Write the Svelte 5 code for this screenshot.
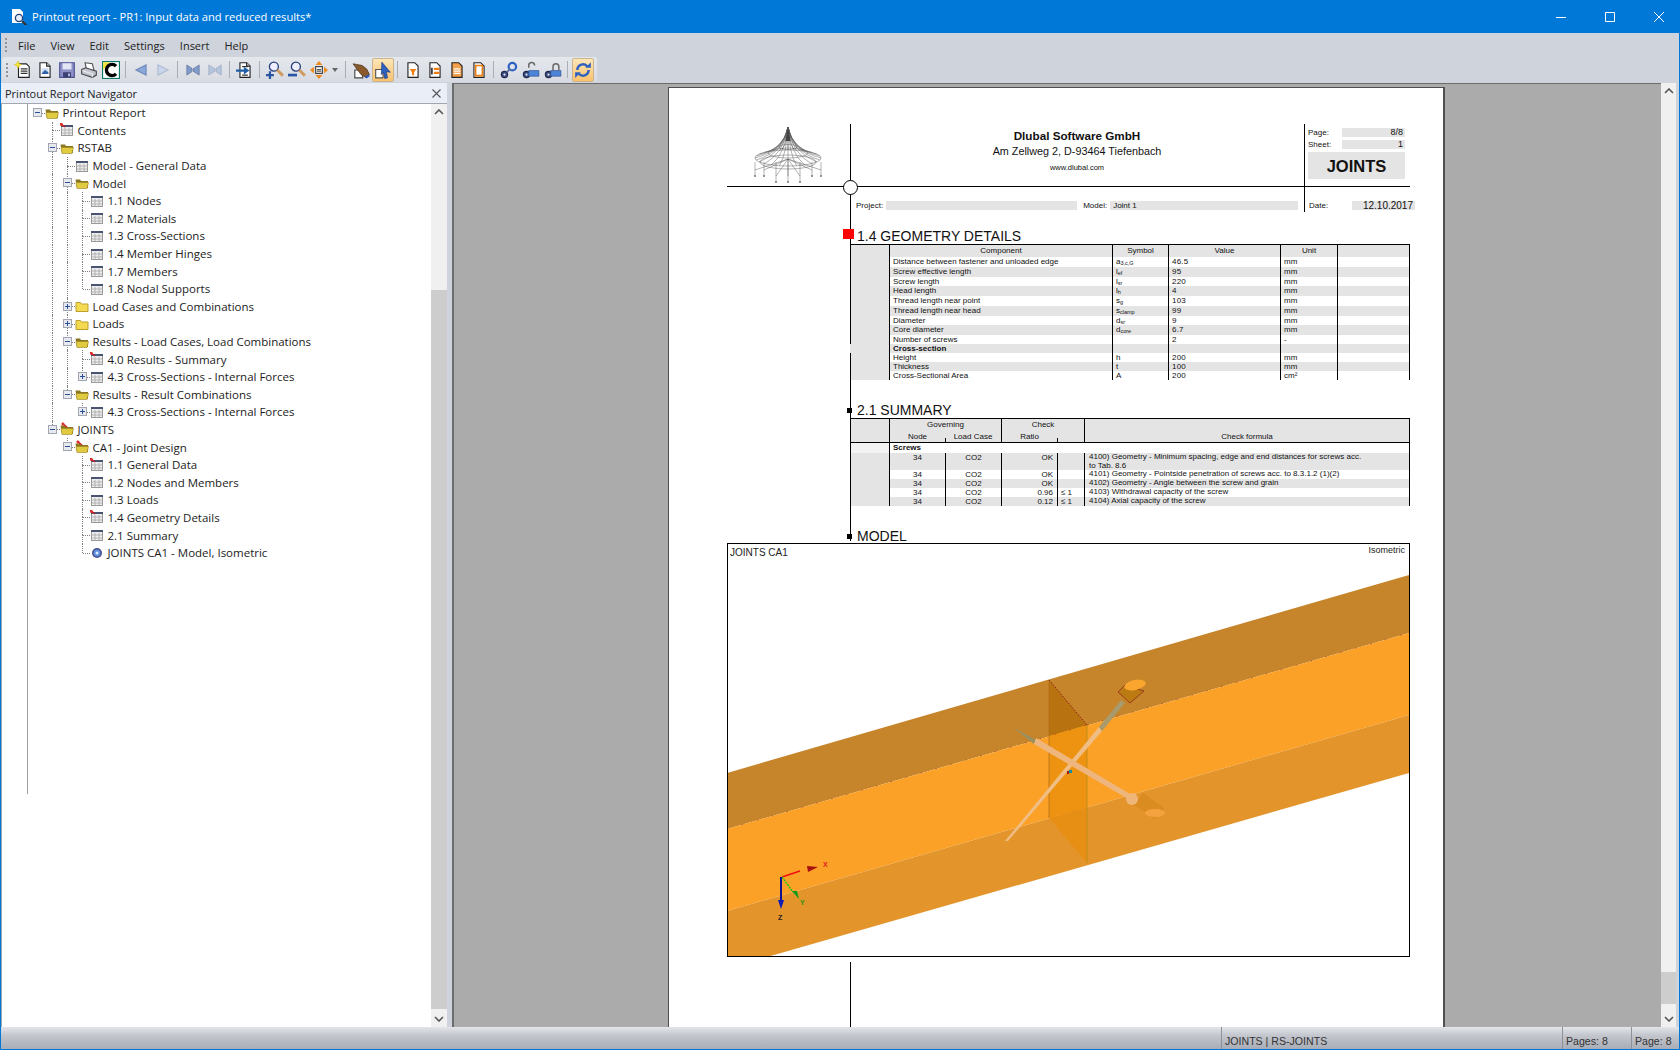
<script>
	const menus = ['File', 'View', 'Edit', 'Settings', 'Insert', 'Help'];

	// groups of toolbar icons, a separator between each group
	const toolGroups = [
		['new', 'image', 'save', 'print', 'refresh'],
		['prev', 'next'],
		['first', 'last'],
		['export'],
		['zoomin', 'zoomout', 'fit', 'drop'],
		['hand', 'pointer'],
		['filter', 'lines', 'orange', 'blank'],
		['link', 'unlock', 'lock'],
		['sync']
	];
	const activeTools = ['pointer', 'sync'];

	const rawTree = [
		[0, 'Printout Report', 'folder', '-'],
		[1, 'Contents', 'pinned'],
		[1, 'RSTAB', 'folder', '-'],
		[2, 'Model - General Data', 'table'],
		[2, 'Model', 'folder', '-'],
		[3, '1.1 Nodes', 'table'],
		[3, '1.2 Materials', 'table'],
		[3, '1.3 Cross-Sections', 'table'],
		[3, '1.4 Member Hinges', 'table'],
		[3, '1.7 Members', 'table'],
		[3, '1.8 Nodal Supports', 'table'],
		[2, 'Load Cases and Combinations', 'closed', '+'],
		[2, 'Loads', 'closed', '+'],
		[2, 'Results - Load Cases, Load Combinations', 'folder', '-'],
		[3, '4.0 Results - Summary', 'pinned'],
		[3, '4.3 Cross-Sections - Internal Forces', 'table', '+'],
		[2, 'Results - Result Combinations', 'folder', '-'],
		[3, '4.3 Cross-Sections - Internal Forces', 'table', '+'],
		[1, 'JOINTS', 'pinfolder', '-'],
		[2, 'CA1 - Joint Design', 'pinfolder', '-'],
		[3, '1.1 General Data', 'pinned'],
		[3, '1.2 Nodes and Members', 'table'],
		[3, '1.3 Loads', 'table'],
		[3, '1.4 Geometry Details', 'pinned'],
		[3, '2.1 Summary', 'table'],
		[3, 'JOINTS CA1 - Model, Isometric', 'eye']
	];

	// does another row of this level follow before the branch closes?
	function continues(idx, level) {
		for (let i = idx + 1; i < rawTree.length; i++) {
			if (rawTree[i][0] < level) return false;
			if (rawTree[i][0] === level) return true;
		}
		return false;
	}

	const tree = rawTree.map(([level, label, icon, exp], idx) => ({
		level,
		label,
		icon,
		exp,
		guides: Array.from({ length: level }, (_, j) => j > 0 && continues(idx, j)),
		more: level > 0 && continues(idx, level)
	}));

	const geometry = [
		['Distance between fastener and unloaded edge', 'a', '3,c,G', '46.5', 'mm', 10],
		['Screw effective length', 'l', 'ef', '95', 'mm', 10],
		['Screw length', 'l', 'sr', '220', 'mm', 9],
		['Head length', 'l', 'h', '4', 'mm', 10],
		['Thread length near point', 's', 'g', '103', 'mm', 10],
		['Thread length near head', 's', 'clamp', '99', 'mm', 10],
		['Diameter', 'd', 'sr', '9', 'mm', 9],
		['Core diameter', 'd', 'core', '6.7', 'mm', 10],
		['Number of screws', '', '', '2', '-', 9],
		['Cross-section', '', '', '', '', 9],
		['Height', 'h', '', '200', 'mm', 9],
		['Thickness', 't', '', '100', 'mm', 9],
		['Cross-Sectional Area', 'A', '', '200', 'cm²', 9]
	];

	const checks = [
		['OK', '', '4100) Geometry - Minimum spacing, edge and end distances for screws acc.\nto Tab. 8.6', 17],
		['OK', '', '4101) Geometry - Pointside penetration of screws acc. to 8.3.1.2 (1)(2)', 9],
		['OK', '', '4102) Geometry - Angle between the screw and grain', 9],
		['0.96', '≤ 1', '4103) Withdrawal capacity of the screw', 9],
		['0.12', '≤ 1', '4104) Axial capacity of the screw', 9]
	];

	// roof of the logo: curved ribs from the mast down to an elliptical ring
	const ribs = Array.from({ length: 24 }, (_, i) => {
		const a = (i / 24) * Math.PI * 2;
		const x = 61 + 33 * Math.cos(a);
		const y = 34 + 8 * Math.sin(a);
		return `M61 3Q${61 + 5 * Math.cos(a)} ${27 + 2 * Math.sin(a)} ${x.toFixed(1)} ${y.toFixed(1)}`;
	});
	const legs = [-33, -24, -12, 0, 12, 24, 33];
</script>

{#snippet page(fill = '#fff')}
	<path d="M3.5 1.5h6l3 3v10h-9z" fill={fill} stroke="#222" />
	<path d="M9.5 1.5v3h3" fill="#ddd" stroke="#222" />
{/snippet}

{#snippet glass(x, y)}
	<circle cx={x} cy={y} r="3.6" fill="#e6eef8" stroke="#1d3f7c" stroke-width="1.3" />
	<path d="M{x + 3} {y + 3}l5 5" stroke="#333" stroke-width="2.2" />
{/snippet}

{#snippet tool(name)}
	<svg viewBox="0 0 16 16" width="18" height="18">
		{#if name === 'new'}
			<path d="M4 2.500h7l2.500 2.500v9.500H4z" fill="#fff" stroke="#222" />
			<path d="M6 7h6M6 9h6M6 11h6" stroke="#333" />
			<path d="M3.500 0l1 2.400 2.400.8-2.400 1-1 2.400-1-2.400-2.400-1 2.400-.8z" fill="#f6e63a" stroke="#d0b400" stroke-width=".4" />
		{:else if name === 'image'}
			{@render page()}
			<path d="M5 6.500h6v5H5z" fill="#cfdcf0" />
			<path d="M5 11l3-3 3 2v1.500H5z" fill="#2f62a8" />
		{:else if name === 'save'}
			<path d="M1.500 1.500h13v13h-13z" fill="#8c90c6" stroke="#4d5290" />
			<path d="M4 2h8v5.500H4z" fill="#e3e5f4" />
			<path d="M4.500 10h7v4.500h-7z" fill="#3c3f72" />
			<path d="M9 11h1.500v2.500H9z" fill="#c9cbe4" />
		{:else if name === 'print'}
			<path d="M4.500 1.500l6.500 1 1.500 6h-6.500z" fill="#fff" stroke="#555" />
			<path d="M1.500 7.500l3.500-1.500 9.500 3v3.500l-3.500 2-9.500-3z" fill="#c3c6cf" stroke="#444" />
			<path d="M2 8.500l9 3v3" fill="none" stroke="#fff" stroke-width=".7" />
		{:else if name === 'refresh'}
			<rect x=".5" y=".5" width="15" height="15" fill="#fff" stroke="#0d7a68" />
			<path d="M1 1h6L1 8z" fill="#f1e23b" />
			<path d="M12.500 4.500A5 5 0 1 0 12.500 11.500" fill="none" stroke="#000" stroke-width="3" />
		{:else if name === 'prev'}
			<path d="M3.500 8L12.500 3.500v9z" fill="#8aa8dc" stroke="#6f88b8" />
		{:else if name === 'next'}
			<path d="M12.500 8L3.500 3.500v9z" fill="#c9d6ec" stroke="#aebbd2" />
		{:else if name === 'first'}
			<path d="M2.500 3.500L7 6.500v3l-4.500 3zM13.500 3.500L8 7v2l5.500 3.500z" fill="#7f9ccf" stroke="#5f6f90" stroke-width=".6" />
		{:else if name === 'last'}
			<path d="M13.500 3.500L9 6.500v3l4.500 3zM2.500 3.500L8 7v2l-5.500 3.500z" fill="#b6c5de" stroke="#98a6bd" stroke-width=".6" />
		{:else if name === 'export'}
			{@render page()}
			<path d="M5.500 5h5M5.500 12.500h5" stroke="#333" />
			<path d="M0 7.500h7V5l5 3.500-5 3.500V9.500H0z" fill="#1f5fa8" />
		{:else if name === 'zoomin'}
			<path d="M0 12.500h7M3.500 9v7" stroke="#2a55a5" stroke-width="2" />
			<circle cx="7" cy="5" r="4" fill="#eef" stroke="#2a3f7c" stroke-width="1.200" />
			<path d="M10 8l5 5" stroke="#d09a60" stroke-width="2.600" />
		{:else if name === 'zoomout'}
			<path d="M0 12.500h8" stroke="#2a55a5" stroke-width="2.400" />
			<circle cx="7" cy="5" r="4" fill="#eef" stroke="#2a3f7c" stroke-width="1.200" />
			<path d="M10 8l5 5" stroke="#d09a60" stroke-width="2.600" />
		{:else if name === 'fit'}
			<path d="M5 5h6v6H5z" fill="#fff" stroke="#444" />
			<path d="M6 7.500h4M6 9h4" stroke="#555" />
			<path d="M8 0l3 3.500H5zM8 16l3-3.500H5zM0 8l3.500-3v6zM16 8l-3.500-3v6z" fill="#ef8a1c" />
		{:else if name === 'hand'}
			<path d="M2.500 8h7v7h-7z" fill="#fff" stroke="#444" />
			<path d="M1 2.500l3 .5 5 1 4 3 2.500 5-3 2.500-4-2-4-5z" fill="#8a5a2c" stroke="#3e2510" stroke-width=".6" />
			<path d="M11 14l4-2 .8 1.500-3 2z" fill="#2c55b8" />
		{:else if name === 'pointer'}
			<path d="M1.500 7.500h6.500v7.500H1.500z" fill="#fff" stroke="#555" />
			<path d="M7 1l7.500 9-3.500-.5 1 5.500-2.500.5-1-5.500-2 2z" fill="#2e62c0" stroke="#1b3a80" stroke-width=".6" />
		{:else if name === 'filter' || name === 'lines' || name === 'orange' || name === 'blank'}
			<path d="M3.500 1.500h6l3 3v10h-9z" fill={name === 'orange' ? '#f2a04a' : '#fff'} stroke="#222" />
			{#if name === 'filter'}
				<path d="M5 7h6L9 10v3L7 12v-2z" fill="#ef7d10" />
			{:else if name === 'lines'}
				<path d="M7 6h5v2H7zM7 9.500h5v2H7z" fill="#ef7d10" />
				<path d="M4.500 6h1.500v6H4.500z" fill="#333" />
			{:else if name === 'orange'}
				<path d="M5 7h6M5 9h6M5 11h6" stroke="#fff" />
			{:else}
				<path d="M5 4h6v9H5z" fill="#fff" stroke="#ef7d10" stroke-width="1.400" />
			{/if}
		{:else if name === 'link' || name === 'unlock' || name === 'lock'}
			<circle cx="4" cy="12" r="2.800" fill="#3a4b7c" stroke="#1d2950" />
			<circle cx="4" cy="12" r="1" fill="#dfe6f5" />
			{#if name === 'link'}
				<circle cx="11" cy="5" r="3.300" fill="none" stroke="#2e62c0" stroke-width="2" />
				<path d="M6 10l3-3" stroke="#5a6c9c" stroke-width="1.600" />
			{:else}
				<path d="M6 8.500h9v5H6z" fill="#4d86d8" stroke="#2c4e90" stroke-width=".6" />
				<path d={name === 'lock' ? 'M8 8.500V5a2.600 2.600 0 0 1 5.200 0v3.500' : 'M6 6V4a2.600 2.600 0 0 1 5.200 0'} fill="none" stroke="#666" stroke-width="1.300" />
			{/if}
		{:else if name === 'sync'}
			<path d="M3 8a5 5 0 0 1 9-3" fill="none" stroke="#2f62c0" stroke-width="2.200" />
			<path d="M13 8a5 5 0 0 1-9 3" fill="none" stroke="#2f62c0" stroke-width="2.200" />
			<path d="M10 6h5V1zM6 10H1v5z" fill="#2f62c0" />
		{/if}
	</svg>
{/snippet}

{#snippet nodeIcon(kind)}
	<svg viewBox="0 0 14 14" width="14" height="14">
		{#if kind === 'table' || kind === 'pinned'}
			<rect x="1.500" y="2.500" width="11" height="10" fill="#ececec" stroke="#9a9a9a" />
			<rect x="1" y="2" width="12" height="2" fill="#4a5272" />
			<path d="M5 5v7M9 5v7M2 7h10M2 10h10" stroke="#a8a8a8" stroke-width=".8" />
			{#if kind === 'pinned'}
				<path d="M0 0l5 4" stroke="#c62020" stroke-width="1.400" />
				<circle cx="1.500" cy="1.500" r="1.500" fill="#e02b2b" />
			{/if}
		{:else if kind === 'closed'}
			<path d="M1 3.500h4.500l1 1.500h6.500v7.500H1z" fill="#f4da50" stroke="#b9a030" />
		{:else if kind === 'eye'}
			<circle cx="7" cy="7" r="5" fill="#4a4e8c" />
			<circle cx="7" cy="7" r="3.400" fill="#5d8fe0" />
			<circle cx="7" cy="7" r="1.500" fill="#dfe8ff" />
		{:else}
			<path d="M.5 3.500h4.500l1 1.500h7v7H2z" fill="#8a7520" />
			<path d="M1 6.500h12.500l-1.500 6H2z" fill="#e0ca40" stroke="#9a8428" stroke-width=".6" />
			{#if kind === 'pinfolder'}
				<path d="M2 1l5 4" stroke="#c62020" stroke-width="1.400" />
				<circle cx="3" cy="2" r="1.500" fill="#e02b2b" />
			{/if}
		{/if}
	</svg>
{/snippet}

{#snippet scrollbar(kind)}
	<div class="sb {kind}">
		<div class="sb-btn">
			<svg viewBox="0 0 10 6" width="10" height="6"><path d="M1 5l4-4 4 4" fill="none" stroke="#555" stroke-width="1.600" /></svg>
		</div>
		<div class="sb-track"><div class="sb-thumb"></div></div>
		<div class="sb-btn">
			<svg viewBox="0 0 10 6" width="10" height="6"><path d="M1 1l4 4 4-4" fill="none" stroke="#555" stroke-width="1.600" /></svg>
		</div>
	</div>
{/snippet}

<div class="window">
	<header class="titlebar">
		<svg class="app-icon" viewBox="0 0 16 16" width="16" height="16">
			<path d="M1 0h8l3 3v11H1z" fill="#fff" />
			{@render glass(8, 9)}
		</svg>
		<span class="title">Printout report - PR1: Input data and reduced results*</span>
		<div class="caption">
			<svg viewBox="0 0 10 10" width="10" height="10"><path d="M0 5.500h10" stroke="#fff" /></svg>
			<svg viewBox="0 0 10 10" width="10" height="10"><path d="M.5.500h9v9h-9z" fill="none" stroke="#fff" /></svg>
			<svg viewBox="0 0 10 10" width="10" height="10"><path d="M0 0l10 10M10 0L0 10" stroke="#fff" /></svg>
		</div>
	</header>

	<nav class="menubar">
		<span class="grip"></span>
		{#each menus as m}
			<span class="menu">{m}</span>
		{/each}
	</nav>

	<div class="toolbar">
		<span class="grip"></span>
		{#each toolGroups as group, g}
			{#if g > 0}<span class="tool-sep"></span>{/if}
			{#each group as t}
				{#if t === 'drop'}
					<span class="drop"></span>
				{:else}
					<span class="tool" class:active={activeTools.includes(t)}>{@render tool(t)}</span>
				{/if}
			{/each}
		{/each}
	</div>

	<main class="workspace">
		<aside class="navigator">
			<div class="nav-head">
				<span>Printout Report Navigator</span>
				<svg viewBox="0 0 9 9" width="9" height="9"><path d="M.5.500l8 8M8.500.500l-8 8" stroke="#555" stroke-width="1.100" /></svg>
			</div>
			<div class="nav-body">
				<div class="tree">
					<span class="tree-rule"></span>
					{#each tree as node}
						<div class="node">
							{#each node.guides as on}
								<span class="cell">{#if on}<i class="v full"></i>{/if}</span>
							{/each}
							<span class="cell">
								{#if node.level > 0}<i class="v up"></i>{/if}
								{#if node.more}<i class="v down"></i>{/if}
								<i class="h"></i>
								{#if node.exp}
									<b class="box">
										<svg viewBox="0 0 9 9" width="9" height="9">
											<path d="M2 4.500h5" stroke="#2a4f9c" />
											{#if node.exp === '+'}<path d="M4.500 2v5" stroke="#2a4f9c" />{/if}
										</svg>
									</b>
								{/if}
							</span>
							<span class="node-icon">{@render nodeIcon(node.icon)}</span>
							<span class="node-label">{node.label}</span>
						</div>
					{/each}
				</div>
				{@render scrollbar('sb-left')}
			</div>
		</aside>

		<section class="viewer">
			<article class="sheet">
				<span class="spine s1"></span>
				<span class="spine s2"></span>
				<span class="spine s3"></span>

				<div class="letterhead">
					<div class="logo">
						<svg viewBox="0 0 123 63" width="123" height="63">
							<g fill="none" stroke="#555" stroke-width=".45">
								{#each ribs as d}<path {d} />{/each}
								<ellipse cx="61" cy="34" rx="33" ry="8" />
								<ellipse cx="61" cy="29" rx="20" ry="5" />
								<ellipse cx="61" cy="23" rx="9" ry="2.500" />
								<ellipse cx="61" cy="38" rx="28" ry="7" />
								{#each legs as dx}
									<path d="M{61 + dx} {34 + (dx === 0 ? 8 : 4)}V{dx === 0 || Math.abs(dx) === 12 ? 58 : 52}" />
									<path d="M61 35L{61 + dx} {dx === 0 || Math.abs(dx) === 12 ? 52 : 46}" />
								{/each}
							</g>
							<path d="M61 3l-2.500 14h5z" fill="#444" />
							{#each legs as dx}
								<circle cx={61 + dx} cy={dx === 0 || Math.abs(dx) === 12 ? 58 : 52} r="1" fill="#777" />
							{/each}
						</svg>
					</div>
					<div class="company">
						<strong>Dlubal Software GmbH</strong>
						<span class="address">Am Zellweg 2, D-93464 Tiefenbach</span>
						<span class="web">www.dlubal.com</span>
					</div>
					<div class="pageinfo">
						<div class="info"><span>Page:</span><em>8/8</em></div>
						<div class="info"><span>Sheet:</span><em>1</em></div>
						<div class="stamp">JOINTS</div>
					</div>
					<div class="meta-left"></div>
					<div class="meta-mid">
						<span>Project:</span><em class="project"></em>
						<span>Model:</span><em class="model">Joint 1</em>
					</div>
					<div class="meta-right">
						<span>Date:</span><em>12.10.2017</em>
					</div>
					<span class="hub"></span>
				</div>

				<h2 class="sec first"><span class="mark red"></span>1.4 GEOMETRY DETAILS</h2>
				<div class="tbl geo">
					<div class="geo-row head">
						<span></span><span class="c">Component</span><span class="c">Symbol</span><span class="c">Value</span><span class="c">Unit</span><span></span>
					</div>
					{#each geometry as [label, sym, sub, val, unit, h], i}
						<div class="geo-row" class:shade={i % 2 === 1} style="height: {h}px">
							<span></span>
							<span class:bold={label === 'Cross-section'}>{label}</span>
							<span>{sym}{#if sub}<sub>{sub}</sub>{/if}</span>
							<span class="spaced">{val}</span>
							<span>{unit}</span>
							<span></span>
						</div>
					{/each}
				</div>

				<h2 class="sec"><span class="mark"></span>2.1 SUMMARY</h2>
				<div class="tbl sum">
					<div class="sum-head">
						<span class="blank"></span>
						<span class="c gov">Governing</span>
						<span class="c chk">Check</span>
						<span class="c formula">Check formula</span>
						<span class="c node-h">Node</span>
						<span class="c lc-h tick">Load Case</span>
						<span class="c ratio-h">Ratio</span>
						<span class="tick lim-h"></span>
					</div>
					<div class="sum-sub">
						<span></span><b>Screws</b>
					</div>
					{#each checks as [ratio, lim, text, h], i}
						<div class="sum-row" class:shade={i % 2 === 0} style="height: {h}px">
							<span></span>
							<span class="c">34</span>
							<span class="c">CO2</span>
							<span class="r">{ratio}</span>
							<span class="lim">{lim}</span>
							<span class="txt">{text}</span>
						</div>
					{/each}
				</div>

				<h2 class="sec last"><span class="mark"></span>MODEL</h2>
				<figure class="model-view">
					<svg viewBox="728 544 681 412" width="681" height="412">
						<!-- beam faces -->
						<path d="M727 773L1409 575V633L727 829z" fill="#c6842b" />
						<path d="M727 829L1409 633V715L727 911z" fill="#fba127" />
						<path d="M727 911L1409 715V773L767 957H727z" fill="#e3952b" />
						<!-- section plane -->
						<path d="M1049 680L1087 725L1049 736z" fill="#b8720f" />
						<path d="M1049 736L1087 725V807L1049 818z" fill="#ee9311" />
						<path d="M1049 818L1087 807V863z" fill="#e78f14" />
						<path d="M1049 680V818" stroke="#b26f18" stroke-width=".8" />
						<path d="M1087 725V863" stroke="#b48a16" stroke-width=".8" />
						<path d="M1049 680L1087 725" stroke="#8f1d1d" stroke-dasharray="1.500 1.500" />
						<path d="M727 829L1087 725M1087 725L1409 633" stroke="#a5321d" stroke-width=".6" stroke-dasharray="1.500 14" />
						<!-- screws -->
						<path d="M1005 841L1099 727L1102 731L1008 841z" fill="#f0bd85" />
						<path d="M1099 727L1121 700L1125 703L1102 731z" fill="#a89a6a" />
						<path d="M1013 727L1036 740L1034 744z" fill="#9a9060" />
						<path d="M1036 738L1130 794L1128 799L1034 744z" fill="#eeb67c" />
						<path d="M1118 692L1125 685L1144 691L1130 703z" fill="#bc7a12" stroke="#8a2020" stroke-width=".7" />
						<ellipse cx="1135" cy="685" rx="11" ry="5" fill="#f9a52e" transform="rotate(-12 1135 685)" />
						<path d="M1134 805L1143 793L1164 808L1155 819z" fill="#d78a1e" opacity=".8" />
						<circle cx="1132" cy="799" r="6" fill="#efb67a" />
						<ellipse cx="1155" cy="813" rx="10" ry="4" fill="#f4a23e" />
						<rect x="1069" y="770" width="3" height="3" fill="#0e8fa8" />
						<rect x="1067" y="771" width="2" height="3" fill="#a02020" />
						<!-- axes -->
						<path d="M782 877L800 871" stroke="#f01010" stroke-width="1.600" />
						<path d="M807 866L818 867L808 872z" fill="#a80f0f" />
						<path d="M782 877L793 892" stroke="#13c513" stroke-width="1.400" stroke-dasharray="2 1" />
						<path d="M792 891L797 891L799 899z" fill="#0f9a1f" />
						<path d="M781 877V902" stroke="#101090" stroke-width="2" />
						<path d="M778 900H784L781 909z" fill="#1018b8" />
						<text x="823" y="867" class="axis" fill="#e02020">X</text>
						<text x="800" y="905" class="axis" fill="#2e8f14">Y</text>
						<text x="778" y="920" class="axis" fill="#222">Z</text>
						<text x="730" y="556" class="cap">JOINTS CA1</text>
						<text x="1405" y="553" class="cap small" text-anchor="end">Isometric</text>
					</svg>
				</figure>
			</article>
		</section>

		{@render scrollbar('sb-right')}
	</main>

	<footer class="statusbar">
		<span class="st-main">JOINTS | RS-JOINTS</span>
		<span class="st-pages">Pages: 8</span>
		<span class="st-page">Page: 8</span>
	</footer>
</div>

<style>
	:global(body) {
		margin: 0;
	}

	.window {
		box-sizing: border-box;
		width: 1680px;
		height: 1050px;
		border: 1px solid #0078d7;
		border-top: 0;
		display: flex;
		flex-direction: column;
		overflow: hidden;
		background: #cfd3dc;
		font-family: 'Open Sans', 'Liberation Sans', sans-serif;
		font-size: 11.5px;
		color: #1a1a1a;
	}

	.titlebar {
		height: 33px;
		flex: none;
		background: #0078d7;
		color: #fff;
		display: flex;
		align-items: center;
		padding-left: 10px;
	}

	.app-icon {
		margin-right: 5px;
	}

	.title {
		font-size: 11.15px;
		flex: 1;
	}

	.caption {
		display: flex;
		gap: 39px;
		padding-right: 15px;
	}

	.menubar {
		height: 24px;
		flex: none;
		display: flex;
		align-items: center;
		padding-left: 4px;
		font-size: 11px;
	}

	.menu {
		margin-left: 11px;
		margin-right: 4px;
		color: #222;
	}

	.grip {
		width: 2px;
		height: 14px;
		background: repeating-linear-gradient(to bottom, #8f939c 0 2px, transparent 2px 4px);
	}

	.toolbar {
		height: 25px;
		width: 595px;
		flex: none;
		margin-bottom: 1px;
		margin-left: 1px;
		display: flex;
		align-items: center;
		padding-left: 4px;
		box-sizing: border-box;
		background: linear-gradient(#e4e7ec, #d8dbe2);
		border-radius: 3px;
	}

	.toolbar .grip {
		margin-right: 4px;
	}

	.tool {
		width: 22px;
		height: 24px;
		box-sizing: border-box;
		display: flex;
		align-items: center;
		justify-content: center;
		flex: none;
	}

	.tool.active {
		background: linear-gradient(#fde6b8, #fbc26e);
		border: 1px solid #c9b48c;
		border-radius: 2px;
	}

	.tool-sep {
		width: 1px;
		height: 17px;
		margin: 0 4px 0 3px;
		background: #a9adb6;
		flex: none;
	}

	.drop {
		width: 0;
		height: 0;
		margin: 0 4px 0 2px;
		border: 3.5px solid transparent;
		border-top: 4px solid #666;
		border-bottom: 0;
		flex: none;
	}

	.workspace {
		flex: 1;
		min-height: 0;
		display: flex;
	}

	.navigator {
		width: 446px;
		margin-right: 5px;
		flex: none;
		display: flex;
		flex-direction: column;
	}

	.nav-head {
		height: 20px;
		flex: none;
		background: #e9eef7;
		display: flex;
		align-items: center;
		justify-content: space-between;
		padding: 0 6px 0 4px;
		font-size: 11px;
		color: #222;
	}

	.nav-body {
		flex: 1;
		min-height: 0;
		display: flex;
		background: #fff;
		border-top: 1px solid #a3a7b0;
		border-left: 1px solid #a3a7b0;
	}

	.tree {
		flex: 1;
		position: relative;
		padding: 0 0 0 28px;
	}

	.tree-rule {
		position: absolute;
		left: 25px;
		top: 0;
		height: 690px;
		width: 1px;
		background: #a0a0a0;
	}

	.node {
		height: 17.6px;
		display: flex;
		align-items: center;
		color: #1c1c1c;
		white-space: nowrap;
	}

	.cell {
		width: 15px;
		height: 100%;
		flex: none;
		position: relative;
	}

	.v {
		position: absolute;
		left: 7px;
		width: 0;
		border-left: 1px dotted #808080;
	}

	.v.full {
		top: 0;
		bottom: 0;
	}

	.v.up {
		top: 0;
		height: 50%;
	}

	.v.down {
		top: 50%;
		bottom: 0;
	}

	.h {
		position: absolute;
		left: 8px;
		right: 0;
		top: 50%;
		border-top: 1px dotted #808080;
	}

	.box {
		position: absolute;
		left: 3px;
		top: 4px;
		width: 9px;
		height: 9px;
		background: #e8e9ee;
		outline: 1px solid #a2a6b0;
		outline-offset: -1px;
		display: flex;
	}

	.node-icon {
		width: 14px;
		height: 14px;
		flex: none;
		margin-right: 3.5px;
		display: flex;
	}

	.sb {
		width: 16px;
		flex: none;
		background: #f0f0f0;
		display: flex;
		flex-direction: column;
	}

	.sb-btn {
		height: 16px;
		flex: none;
		display: flex;
		align-items: center;
		justify-content: center;
	}

	.sb-track {
		flex: 1;
		min-height: 0;
	}

	.sb-thumb {
		background: #cdcdcd;
	}

	.sb-left .sb-thumb {
		margin-top: 170px;
		height: 719px;
	}

	.sb-right {
		width: 15px;
		margin-right: 3px;
	}

	.sb-right .sb-thumb {
		margin-top: 873px;
		height: 32px;
	}

	.viewer {
		flex: 1;
		min-width: 0;
		background: #ababab;
		border-top: 1px solid #6c6c6c;
		border-left: 2px solid #6c6c6c;
		padding-top: 3px;
		display: flex;
		justify-content: center;
		box-sizing: border-box;
		overflow: hidden;
	}

	.sheet {
		position: relative;
		box-sizing: border-box;
		width: 777px;
		height: 950px;
		margin-left: -2px;
		padding: 36px 0 0 58px;
		background: #fff;
		border: 1px solid #4f4f4f;
		border-right-width: 2px;
		font-family: 'Liberation Sans', Arial, sans-serif;
		color: #111;
	}

	.spine {
		position: absolute;
		left: 181px;
		width: 1px;
		background: #000;
	}

	.s1 {
		top: 36px;
		height: 220px;
	}

	.s2 {
		top: 265px;
		height: 188px;
	}

	.s3 {
		top: 874px;
		height: 80px;
	}

	.letterhead {
		position: relative;
		width: 683px;
		height: 88px;
		display: grid;
		grid-template-columns: 123px 455px 105px;
		grid-template-rows: 63px 25px;
	}

	.logo {
		border-bottom: 1px solid #000;
		box-sizing: border-box;
	}

	.company {
		border-bottom: 1px solid #000;
		border-right: 1px solid #000;
		box-sizing: border-box;
		display: flex;
		flex-direction: column;
		align-items: center;
		padding-top: 5px;
		font-size: 11px;
	}

	.company strong {
		font-size: 11.7px;
		line-height: 14px;
		color: #111;
	}

	.address {
		margin-top: 2px;
		line-height: 13px;
		font-size: 10.8px;
	}

	.web {
		margin-top: 5px;
		font-size: 7.5px;
	}

	.pageinfo {
		border-bottom: 1px solid #000;
		box-sizing: border-box;
		padding: 4px 5px 0 3px;
		font-size: 8px;
	}

	.info {
		display: flex;
		justify-content: space-between;
		align-items: center;
		height: 9px;
		margin-bottom: 3px;
	}

	.info em,
	.meta-mid em,
	.meta-right em {
		font-style: normal;
		background: #e4e4e4;
		height: 9px;
		line-height: 9px;
	}

	.info em {
		width: 63px;
		text-align: right;
		padding-right: 2px;
		box-sizing: border-box;
		font-size: 9px;
	}

	.stamp {
		height: 27px;
		margin-top: 1px;
		padding-top: 1px;
		box-sizing: border-box;
		background: #e4e4e4;
		font-size: 16.5px;
		font-weight: 700;
		color: #111;
		display: flex;
		align-items: center;
		justify-content: center;
	}

	.meta-mid {
		display: flex;
		align-items: flex-start;
		padding: 14px 0 0 6px;
		border-right: 1px solid #000;
		font-size: 8px;
		line-height: 9px;
	}

	.meta-mid .project {
		width: 191px;
		margin: 0 6px 0 3px;
	}

	.meta-mid .model {
		width: 188px;
		margin-left: 3px;
		padding-left: 3px;
		box-sizing: border-box;
	}

	.meta-right {
		display: flex;
		align-items: flex-start;
		justify-content: space-between;
		padding: 14px 0 0 4px;
		font-size: 8px;
		line-height: 9px;
		margin-right: -5px;
	}

	.meta-right em {
		width: 63px;
		text-align: right;
		font-size: 10px;
		padding-right: 2px;
		box-sizing: border-box;
	}

	.hub {
		position: absolute;
		left: 116px;
		top: 56px;
		width: 13px;
		height: 13px;
		border: 1px solid #000;
		border-radius: 50%;
		background: #fff;
	}

	.sec {
		position: relative;
		margin: 23px 0 1px 130px;
		height: 14px;
		font-size: 14px;
		line-height: 14px;
		font-weight: 400;
		color: #111;
		white-space: nowrap;
	}

	.sec.first {
		margin-top: 17px;
	}

	.sec.last {
		margin-bottom: 0;
	}

	.mark {
		position: absolute;
		left: -10px;
		top: 5px;
		width: 5px;
		height: 5px;
		background: #000;
	}

	.mark.red {
		left: -14px;
		top: 0;
		width: 11px;
		height: 10px;
		background: #f00;
	}

	.tbl {
		margin-left: 123px;
		width: 560px;
		font-size: 8px;
		line-height: 9px;
		box-sizing: border-box;
		border-top: 1px solid #000;
		border-right: 1px solid #000;
		white-space: nowrap;
	}

	.geo-row,
	.sum-row {
		display: grid;
		height: 10px;
		align-items: center;
	}

	.geo-row {
		grid-template-columns: 39px 223px 56px 112px 57px 1fr;
	}

	.geo-row > span,
	.sum-row > span,
	.sum-sub > * {
		height: 100%;
		box-sizing: border-box;
		padding-left: 3px;
		border-left: 1px solid #000;
		overflow: hidden;
	}

	.geo-row > span:first-child,
	.sum-row > span:first-child,
	.sum-sub > span:first-child {
		background: #e4e4e4;
		border-left: 0;
	}

	.geo-row.head {
		height: 12px;
		background: #e4e4e4;
	}

	.geo-row.head > span {
		line-height: 11px;
	}

	.shade {
		background: #e4e4e4;
	}

	.c {
		text-align: center;
		padding-left: 0 !important;
	}

	.r {
		text-align: right;
		padding-right: 4px;
	}

	.bold {
		font-weight: 700;
	}

	.spaced {
		letter-spacing: .2px;
	}

	sub {
		font-size: 5.5px;
		line-height: 0;
		vertical-align: -1px;
	}

	.sum-head {
		display: grid;
		grid-template-columns: 39px 56px 56px 56px 27px 1fr;
		grid-template-rows: 12px 11px;
		background: #e4e4e4;
		border-bottom: 1px solid #000;
		line-height: 11px;
	}

	.sum-head .blank {
		grid-row: 1 / 3;
	}

	.sum-head .gov {
		grid-column: 2 / 4;
		border-left: 1px solid #000;
	}

	.sum-head .chk {
		grid-column: 4 / 6;
		border-left: 1px solid #000;
	}

	.sum-head .formula {
		grid-column: 6;
		grid-row: 1 / 3;
		align-self: end;
		border-left: 1px solid #000;
		height: 100%;
		display: flex;
		align-items: flex-end;
		justify-content: center;
	}

	.node-h,
	.lc-h,
	.ratio-h,
	.lim-h {
		position: relative;
		grid-row: 2;
	}

	.node-h {
		grid-column: 2;
		border-left: 1px solid #000;
	}

	.lc-h {
		grid-column: 3;
	}

	.ratio-h {
		grid-column: 4;
		border-left: 1px solid #000;
	}

	.lim-h {
		grid-column: 5;
	}

	.tick::before {
		content: '';
		position: absolute;
		left: 0;
		bottom: 0;
		height: 4px;
		width: 1px;
		background: #000;
	}

	.sum-sub {
		display: grid;
		grid-template-columns: 39px 1fr;
		height: 10px;
		line-height: 10px;
	}

	.sum-sub > span:first-child {
		background: #f2f2f2;
	}

	.sum-row {
		grid-template-columns: 39px 56px 56px 56px 27px 1fr;
		align-items: start;
	}

	.sum-row .txt {
		white-space: pre-line;
		padding-left: 4px;
		line-height: 8.5px;
	}

	.model-view {
		margin: 0;
		width: 683px;
		height: 414px;
		box-sizing: border-box;
		border: 1px solid #000;
		background: #fff;
		position: relative;
	}

	.model-view svg {
		display: block;
	}

	.axis {
		font: 700 7px 'Liberation Sans', sans-serif;
	}

	.cap {
		font: 10px 'Liberation Sans', sans-serif;
		fill: #222;
	}

	.cap.small {
		font-size: 9px;
	}

	.statusbar {
		height: 22px;
		flex: none;
		background: linear-gradient(#e3e5ea, #c2c5cc 40%, #a9adb6);
		display: flex;
		align-items: center;
		font-family: 'Liberation Sans', Arial, sans-serif;
		font-size: 10.6px;
		color: #333;
	}

	.statusbar span {
		height: 100%;
		display: flex;
		align-items: center;
		box-sizing: border-box;
		padding: 5px 0 0 3px;
		border-left: 1px solid #8e9199;
	}

	.st-main {
		margin-left: 1220px;
		width: 341px;
	}

	.st-pages {
		width: 69px;
	}
</style>
